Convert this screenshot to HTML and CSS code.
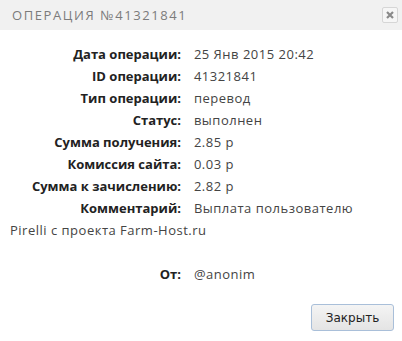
FILE: index.html
```html
<!DOCTYPE html>
<html>
<head>
<meta charset="utf-8">
<title>Операция</title>
<link rel="stylesheet" href="styles.css">
</head>
<body>
	<div class="dialog">
		<div class="titlebar">
			<span class="title">Операция №41321841</span>
			<a href="#" class="close" title="Закрыть">
				<svg width="8" height="8" viewBox="0 0 8 8"><path d="M1 1L7 7M7 1L1 7" stroke="#8a8a8a" stroke-width="2.2"/></svg>
			</a>
		</div>
		<div class="content">
			<div class="info">
				<div class="row"><span class="label">Дата операции:</span> 25 Янв 2015 20:42</div>
				<div class="row"><span class="label">ID операции:</span> 41321841</div>
				<div class="row"><span class="label">Тип операции:</span> перевод</div>
				<div class="row"><span class="label">Статус:</span> выполнен</div>
				<div class="row"><span class="label">Сумма получения:</span> 2.85 р</div>
				<div class="row"><span class="label">Комиссия сайта:</span> 0.03 р</div>
				<div class="row"><span class="label">Сумма к зачислению:</span> 2.82 р</div>
				<div class="row"><span class="label">Комментарий:</span> Выплата пользователю Pirelli с проекта Farm-Host.ru</div>
			</div>
			<div class="info from">
				<div class="row"><span class="label">От:</span> @anonim</div>
			</div>
		</div>
		<div class="buttons">
			<button class="btn">Закрыть</button>
		</div>
	</div>
</body>
</html>
```

FILE: styles.css
```css
body{ margin: 0; background: #fff; font-family: "Open Sans", sans-serif; }

.dialog{ width: 402px; height: 341px; display: flex; flex-direction: column; }

.titlebar{ height: 30px; background: #f1f1f1; display: flex; align-items: center; justify-content: space-between; padding: 0 4px 0 12px; box-sizing: border-box; }
.title{ text-transform: uppercase; color: #7b7b7b; font-size: 13px; letter-spacing: 1.6px; }
.close{ width: 16px; height: 16px; box-sizing: border-box; border: 1px solid #d6d6d6; border-radius: 2px; background: #f6f6f6; display: flex; align-items: center; justify-content: center; }

.content{ padding: 13px 10px 0; flex: 1; color: #444; font-size: 13px; letter-spacing: 0.5px; }
.row{ line-height: 22px; }
.label{ display: inline-block; vertical-align: top; width: 171px; text-align: right; font-weight: bold; color: #222; margin-right: 9px; letter-spacing: 0; }
.from{ margin-top: 22px; }

.buttons{ display: flex; justify-content: flex-end; padding: 0 8px 10px 0; }
.btn{ width: 83px; height: 27px; border: 1px solid #a9bfd9; border-radius: 3px; background: linear-gradient(#f4f4f4, #e4e4e4); font-family: "DejaVu Sans", sans-serif; font-size: 12px; color: #222; }
```
